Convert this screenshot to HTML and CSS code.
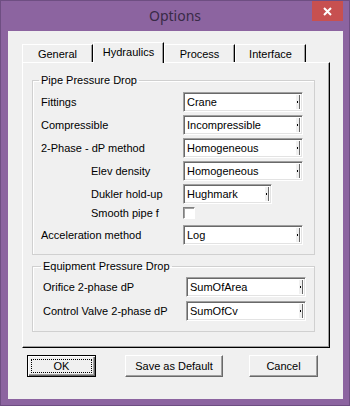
FILE: index.html
```html
<!DOCTYPE html>
<html lang="en">

<head>
    <meta charset="UTF-8">
    <title>Options</title>
    <link rel="stylesheet" href="styles.css">
</head>

<body>
    <div class="window">
        <div class="titlebar">
            <div class="title">Options</div>
            <div class="close">
                <svg width="9" height="9" viewBox="0 0 9 9">
                    <path d="M1 1L8 8M8 1L1 8" stroke="#fff" stroke-width="2" fill="none" />
                </svg>
            </div>
        </div>

        <div class="client">
            <div class="tabs">
                <div class="tab">General</div>
                <div class="tab active">Hydraulics</div>
                <div class="tab">Process</div>
                <div class="tab">Interface</div>
            </div>

            <div class="panel">
                <fieldset class="group">
                    <legend>Pipe Pressure Drop</legend>
                    <div class="row">
                        <span>Fittings</span>
                        <div class="combo"><span class="combo-text">Crane</span><span class="combo-btn"></span></div>
                    </div>
                    <div class="row">
                        <span>Compressible</span>
                        <div class="combo"><span class="combo-text">Incompressible</span><span class="combo-btn"></span></div>
                    </div>
                    <div class="row">
                        <span>2-Phase - dP method</span>
                        <div class="combo"><span class="combo-text">Homogeneous</span><span class="combo-btn"></span></div>
                    </div>
                    <div class="row">
                        <span class="indent">Elev density</span>
                        <div class="combo"><span class="combo-text">Homogeneous</span><span class="combo-btn"></span></div>
                    </div>
                    <div class="row">
                        <span class="indent">Dukler hold-up</span>
                        <div class="combo short"><span class="combo-text">Hughmark</span><span class="combo-btn"></span></div>
                    </div>
                    <div class="row check-row">
                        <span class="indent">Smooth pipe f</span>
                        <div class="checkbox"></div>
                    </div>
                    <div class="row">
                        <span>Acceleration method</span>
                        <div class="combo"><span class="combo-text">Log</span><span class="combo-btn"></span></div>
                    </div>
                </fieldset>

                <fieldset class="group equip">
                    <legend>Equipment Pressure Drop</legend>
                    <div class="row">
                        <span>Orifice 2-phase dP</span>
                        <div class="combo"><span class="combo-text">SumOfArea</span><span class="combo-btn"></span></div>
                    </div>
                    <div class="row">
                        <span>Control Valve 2-phase dP</span>
                        <div class="combo"><span class="combo-text">SumOfCv</span><span class="combo-btn"></span></div>
                    </div>
                </fieldset>
            </div>

            <div class="buttons">
                <button class="btn default"><span class="focus">OK</span></button>
                <button class="btn save">Save as Default</button>
                <button class="btn cancel">Cancel</button>
            </div>
        </div>
    </div>
</body>

</html>
```

FILE: styles.css
```css
body {
    margin: 0;
    font-family: 'Liberation Sans', Arial, sans-serif;
    font-size: 11px;
    color: #000;
}

.window {
    width: 350px;
    height: 406px;
    box-sizing: border-box;
    background-color: #8c64a0;
    border: 1px solid #6e4e82;
    display: flex;
    flex-direction: column;
}

.titlebar {
    height: 30px;
    display: grid;
    grid-template-columns: 1fr auto 1fr;
    align-items: start;
}

.title {
    grid-column: 2;
    font-family: 'Noto Sans', sans-serif;
    font-size: 14px;
    line-height: 30px;
    color: #392a47;
}

.close {
    grid-column: 3;
    justify-self: end;
    width: 31px;
    height: 20px;
    margin-right: 6px;
    background-color: #c75050;
    display: flex;
    align-items: center;
    justify-content: center;
}

.client {
    height: 368px;
    margin: 0 6px 0 7px;
    padding: 10px 0 0 14px;
    box-sizing: border-box;
    background-color: #f0f0f0;
}

/* tabs */
.tabs {
    display: flex;
    align-items: flex-end;
    height: 21px;
}

.tab {
    width: 71px;
    height: 18px;
    box-sizing: border-box;
    border-top: 1px solid #fff;
    border-left: 1px solid #fff;
    border-right: 1px solid #000;
    box-shadow: inset -1px 0 0 #a0a0a0;
    display: flex;
    align-items: center;
    justify-content: center;
}

.tab.active {
    height: 21px;
    margin-bottom: -1px;
    padding-bottom: 3px;
    position: relative;
    z-index: 1;
    background-color: #f0f0f0;
}

.panel {
    width: 308px;
    height: 286px;
    box-sizing: border-box;
    padding: 11px 0 0 9px;
    border-top: 1px solid #fff;
    border-left: 1px solid #fff;
    border-right: 1px solid #000;
    border-bottom: 1px solid #000;
    box-shadow: inset -1px -1px 0 #a0a0a0;
}

/* group boxes */
.group {
    width: 283px;
    margin: 0;
    padding: 5px 0 9px 8px;
    box-sizing: border-box;
    border: 1px solid #d0d0d0;
    box-shadow: inset 1px 1px 0 #fff;
    display: flex;
    flex-direction: column;
    gap: 3px;
}

.group legend {
    padding: 0 2px;
    margin-left: -2px;
    line-height: 13px;
}

.group.equip {
    margin-top: 5px;
    padding: 4px 0 10px 10px;
    gap: 4px;
}

.row {
    display: grid;
    grid-template-columns: 142px auto;
    align-items: center;
    height: 20px;
}

.equip .row {
    grid-template-columns: 143px auto;
}

.indent {
    padding-left: 50px;
}

.check-row {
    height: 12px;
    margin-bottom: 3px;
}

/* combo boxes */
.combo {
    width: 120px;
    height: 20px;
    box-sizing: border-box;
    background-color: #fff;
    border: 1px solid;
    border-color: #a0a0a0 #fff #fff #a0a0a0;
    box-shadow: inset 1px 1px 0 #696969, inset -1px -1px 0 #e3e3e3;
    display: flex;
    align-items: center;
}

.combo.short {
    width: 89px;
}

.combo-text {
    flex: 1;
    padding-left: 3px;
}

.combo-btn {
    width: 3px;
    align-self: stretch;
    margin: 2px 2px 2px 0;
    border-left: 1px solid #fff;
    border-right: 1px solid #696969;
    background-color: #f0f0f0;
    display: flex;
    align-items: center;
    justify-content: center;
}

.combo-btn::before {
    content: "";
    width: 1px;
    height: 2px;
    background-color: #000;
}

.checkbox {
    width: 12px;
    height: 12px;
    box-sizing: border-box;
    background-color: #fff;
    border: 1px solid;
    border-color: #808080 #fff #fff #808080;
    box-shadow: inset 1px 1px 0 #a0a0a0;
}

/* bottom buttons */
.buttons {
    display: flex;
    margin: 7px 0 0 5px;
}

.btn {
    height: 22px;
    padding: 0;
    box-sizing: border-box;
    font-family: 'Liberation Sans', Arial, sans-serif;
    font-size: 11px;
    color: #000;
    background-color: #f0f0f0;
    border: 1px solid;
    border-color: #fff #696969 #696969 #fff;
    box-shadow: inset -1px -1px 0 #a0a0a0;
}

.btn.default {
    width: 69px;
    border: 1px solid #000;
    box-shadow: inset 1px 1px 0 #fff, inset -1px -1px 0 #696969, inset -2px -2px 0 #a0a0a0;
    display: flex;
    align-items: stretch;
}

.focus {
    flex: 1;
    margin: 3px;
    border: 1px dotted #000;
    display: flex;
    align-items: center;
    justify-content: center;
}

.btn.save {
    width: 98px;
    margin-left: 29px;
}

.btn.cancel {
    width: 69px;
    margin-left: 26px;
}
```
